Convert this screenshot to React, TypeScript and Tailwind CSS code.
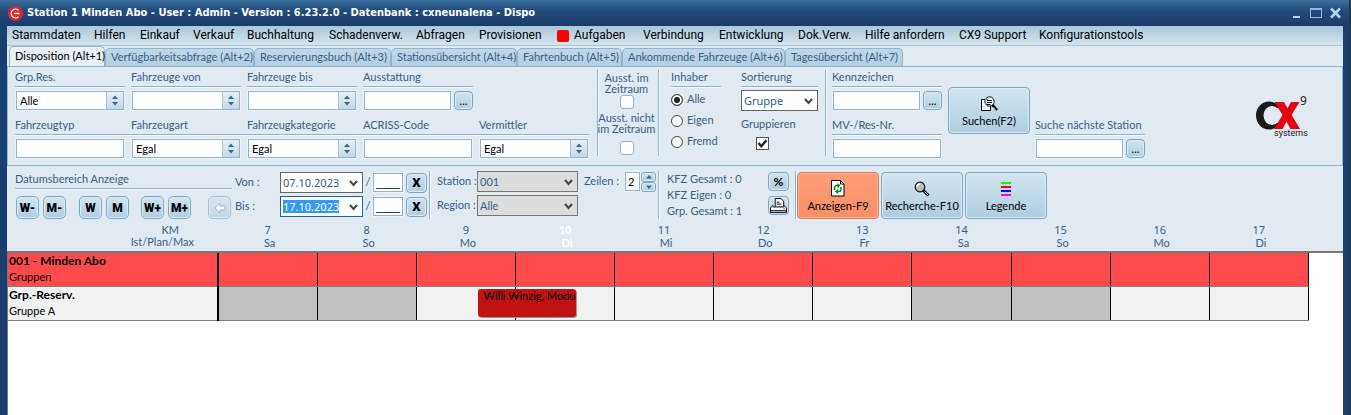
import type { ReactNode } from "react";
import clsx from "clsx";

const menu = [
  { label: "Stammdaten", width: "w-[82px]" },
  { label: "Hilfen", width: "w-[46px]" },
  { label: "Einkauf", width: "w-[53px]" },
  { label: "Verkauf", width: "w-[54px]" },
  { label: "Buchhaltung", width: "w-[82px]" },
  { label: "Schadenverw.", width: "w-[87px]" },
  { label: "Abfragen", width: "w-[63px]" },
  { label: "Provisionen", width: "w-[78px]" },
  { label: "Aufgaben", width: "w-[86px]", marker: true },
  { label: "Verbindung", width: "w-[76px]" },
  { label: "Entwicklung", width: "w-[79px]" },
  { label: "Dok.Verw.", width: "w-[67px]" },
  { label: "Hilfe anfordern", width: "w-[94px]" },
  { label: "CX9 Support", width: "w-[80px]" },
  { label: "Konfigurationstools", width: "w-[110px]" },
];

const tabs = [
  { label: "Disposition (Alt+1)", width: "w-[96px]" },
  { label: "Verfügbarkeitsabfrage (Alt+2)", width: "w-[149px]" },
  { label: "Reservierungsbuch (Alt+3)", width: "w-[137px]" },
  { label: "Stationsübersicht (Alt+4)", width: "w-[126px]" },
  { label: "Fahrtenbuch (Alt+5)", width: "w-[105px]" },
  { label: "Ankommende Fahrzeuge (Alt+6)", width: "w-[163px]" },
  { label: "Tagesübersicht (Alt+7)", width: "w-[118px]" },
];

const days = [
  { num: 7, name: "Sa" },
  { num: 8, name: "So" },
  { num: 9, name: "Mo" },
  { num: 10, name: "Di", today: true },
  { num: 11, name: "Mi" },
  { num: 12, name: "Do" },
  { num: 13, name: "Fr" },
  { num: 14, name: "Sa" },
  { num: 15, name: "So" },
  { num: 16, name: "Mo" },
  { num: 17, name: "Di" },
];

const blueButton =
  "border border-[#79a8c8] bg-linear-to-b from-[#d3e5ef] to-[#aecde0] text-black shadow-[inset_0_0_0_1px_#dcebf4]";
const underline = "border-b border-[#8fb3d3] shadow-[0_1px_0_#f8fbfd]";
const box = "border border-[#8fb5d1] bg-white text-black outline outline-[#edf3f8]";

function Caption({ id, text, joined }: { id?: string; text: string; joined?: boolean }) {
  return (
    <label
      htmlFor={id}
      className={clsx("block h-[17px] leading-[14px] whitespace-nowrap", underline, joined && "-mr-1.5")}
    >
      {text}
    </label>
  );
}

function TextField({ id, label, joined, more }: { id: string; label: string; joined?: boolean; more?: boolean }) {
  return (
    <div className="w-[110px]">
      <Caption id={id} text={label} joined={joined} />
      <div className="mt-1 flex gap-[3px] pl-px">
        <input id={id} className={clsx("h-[19px] min-w-0 px-1", box, more ? "w-[88px]" : "w-[108px]")} />
        {more && (
          <button
            aria-label={`${label} auswählen`}
            className={clsx("h-[19px] w-[19px] shrink-0 rounded-[4px] leading-[17px]", blueButton)}
          >
            ...
          </button>
        )}
      </div>
    </div>
  );
}

function SpinArrows() {
  return (
    <svg width="8" height="11" viewBox="0 0 8 11" fill="#2f6ea3">
      <path d="M4 0.5 7 4H1zM4 10.5 1 7h6z" />
    </svg>
  );
}

function SpinSelect({ id, label, value, joined }: { id: string; label: string; value: string; joined?: boolean }) {
  return (
    <div className="w-[110px]">
      <Caption id={id} text={label} joined={joined} />
      <div className="relative mt-1 ml-px w-[108px]">
        <select id={id} className={clsx("block h-[19px] w-full appearance-none pl-[3px] leading-[17px]", box)}>
          <option>{value}</option>
        </select>
        <span className="pointer-events-none absolute inset-y-px right-px flex w-[17px] items-center justify-center border-l border-[#a9c5da] bg-linear-to-b from-[#e6eff5] to-[#c6d9e6]">
          <SpinArrows />
        </span>
      </div>
    </div>
  );
}

function DropSelect({
  label,
  value,
  className,
  selected,
}: {
  label: string;
  value: string;
  className: string;
  selected?: boolean;
}) {
  return (
    <div className={clsx("relative h-[21px] border", className)}>
      {selected && <span className="absolute top-[3px] left-[2px] h-[13px] w-[56px] bg-[#3399ff]" />}
      <select
        aria-label={label}
        className={clsx(
          "relative block h-full w-full appearance-none bg-transparent pl-[2px] leading-[19px]",
          selected && "text-white",
        )}
      >
        <option>{value}</option>
      </select>
      <svg
        className="pointer-events-none absolute top-[7px] right-1"
        width="9"
        height="7"
        viewBox="0 0 9 7"
        fill="none"
        stroke="#444"
        strokeWidth="2"
      >
        <path d="M1 1 4.500 5 8 1" />
      </svg>
    </div>
  );
}

function Divider({ className = "h-[86px]" }: { className?: string }) {
  return <div className={clsx("w-0.5 shrink-0 border-l border-[#8fb3d3] bg-[#f8fbfd]", className)} />;
}

function CheckBox({ id, dark, checked }: { id: string; dark?: boolean; checked?: boolean }) {
  return (
    <span className={clsx("relative block", dark ? "size-[13px]" : "size-[14px]")}>
      <input
        id={id}
        type="checkbox"
        defaultChecked={checked}
        className={clsx(
          "peer block size-full appearance-none border bg-white",
          dark ? "border-[#555]" : "rounded-[3px] border-[#8fb5d1]",
        )}
      />
      <svg
        className="pointer-events-none absolute inset-0 hidden peer-checked:block"
        viewBox="0 0 13 13"
        fill="none"
        stroke="#222"
        strokeWidth="2.4"
      >
        <path d="M2.500 6 5.300 9.200 10.500 3.200" />
      </svg>
    </span>
  );
}

function Radio({ label, checked }: { label: string; checked?: boolean }) {
  return (
    <label className="flex h-[21px] items-center gap-1">
      <input
        type="radio"
        name="inhaber"
        defaultChecked={checked}
        className="size-3 appearance-none rounded-full border border-[#444] bg-white checked:bg-[#222] checked:shadow-[inset_0_0_0_2px_#fff]"
      />
      {label}
    </label>
  );
}

function BigButton({ label, hot, children }: { label: string; hot?: boolean; children: ReactNode }) {
  return (
    <button
      className={clsx(
        "flex h-[47px] w-[82px] shrink-0 flex-col items-center rounded-[4px] pt-1.5 whitespace-nowrap",
        hot
          ? "border border-[#cf7f62] bg-linear-to-b from-[#ff9d78] to-[#f98f66] text-black shadow-[inset_0_0_0_1px_#ffb497]"
          : blueButton,
      )}
    >
      <span className="flex h-[19px] items-center">{children}</span>
      <span className="leading-4">{label}</span>
    </button>
  );
}

function StepButton({ label, name, className }: { label: ReactNode; name?: string; className?: string }) {
  return (
    <button
      aria-label={name}
      className={clsx(
        "flex size-[23px] shrink-0 items-center justify-center rounded-[5px] font-[Roboto,sans-serif] text-[12px] font-black",
        blueButton,
        className,
      )}
    >
      {label}
    </button>
  );
}

function SearchPageIcon() {
  return (
    <svg width="17" height="16" viewBox="0 0 17 16">
      <path d="M.5 3.500h9v11h-9z" fill="#fff" stroke="#000" />
      <circle cx="8.500" cy="5.500" r="4.700" fill="#fff" stroke="#000" />
      <path d="m11.500 9 4.500 5" stroke="#000" strokeWidth="2.600" />
      <path d="m12.500 11 2 2.500" stroke="#fff" strokeWidth=".7" />
      <path d="M6 4.500h5M6 6.500h5M6 8.500h3.500" stroke="#000" />
      <path d="M4 3.500h3M3.500 5.500h2M4 7.500h2" stroke="#2cc" />
    </svg>
  );
}

function RefreshPageIcon() {
  return (
    <svg width="14" height="17" viewBox="0 0 14 17">
      <path d="M.5.500h9l3.500 3.500v12H.5z" fill="#fff" stroke="#000" />
      <path d="M9.500.500V4H13" fill="none" stroke="#000" />
      <path d="M3.500 10V7.500a2 2 0 0 1 2-2H7M10 7v2.500a2 2 0 0 1-2 2H6.500" fill="none" stroke="#008a1c" strokeWidth="1.500" />
      <path d="M6.500 3 9.500 5.500l-3 2.500zM7 9l-3 2.500 3 2.500z" fill="#008a1c" />
    </svg>
  );
}

function MagnifierIcon() {
  return (
    <svg width="16" height="16" viewBox="0 0 16 16">
      <path d="m9.500 9.500 5 5" stroke="#000" strokeWidth="3" />
      <path d="m10.500 10.500 3.500 3.500" stroke="#aaa" />
      <circle cx="6" cy="6" r="4.800" fill="#bdbdbd" stroke="#111" strokeWidth="1.200" />
      <path d="M3 6a3 3 0 0 1 3-3" fill="none" stroke="#fff" strokeWidth="1.500" />
    </svg>
  );
}

function LegendIcon() {
  return (
    <svg width="10" height="14" viewBox="0 0 10 14" shapeRendering="crispEdges">
      <path d="M0 0h10v2H0z" fill="#0f0" />
      <path d="M0 4h10v2H0z" fill="#f00" />
      <path d="M0 8h10v2H0z" fill="#00f" />
      <path d="M0 12h10v2H0z" fill="#f0f" />
    </svg>
  );
}

function PrinterIcon() {
  return (
    <svg className="shrink-0" width="17" height="16" viewBox="0 0 18 17">
      <path d="m3.500 7.500-3 3v5h17v-5l-3-3" fill="#ddd" stroke="#000" />
      <path d="M5.500 8V1h6l3 3v4z" fill="#fff" />
      <path d="M5.500 9V.500h6l3 3V9M7 4.500h3M7 6.500h5" fill="none" stroke="#000" />
      <path d="M3 9.500h12M.5 13.500h17" stroke="#000" />
      <path d="M1 10.500h16v2H1z" fill="#fff" />
      <path d="M14 11h2v1h-2z" fill="#f33" />
    </svg>
  );
}

function Logo() {
  return (
    <svg width="54" height="48" viewBox="0 0 54 48" role="img" aria-label="CX9 systems">
      <ellipse cx="13" cy="23.500" rx="13" ry="14" fill="#1a1a1a" />
      <ellipse cx="16" cy="23.500" rx="8.500" ry="9.500" fill="#e1e9f1" />
      <path d="M20 16h7v15h-7z" fill="#e1e9f1" />
      <path d="M18.500 10H28l3.500 6.500L35 10h8.500L35.500 23 44 37h-9.500L30.500 29.500 26.500 37H18l8.500-14z" fill="#e60012" />
      <text x="44" y="13" fontSize="12" fontFamily="Noto Sans, sans-serif" fill="#222">
        9
      </text>
      <text x="18" y="44" fontSize="9" fontFamily="Roboto, sans-serif" fill="#222">
        systems
      </text>
    </svg>
  );
}

function TitleBar() {
  return (
    <header className="flex h-[26px] items-center bg-linear-to-b from-[#3b709d] via-[#214c7d] via-40% to-[#1a3c6a] pr-2 pl-2">
      <svg width="15" height="15" viewBox="0 0 15 15" fill="none">
        <circle cx="7.500" cy="7.500" r="7.500" fill="#e8222a" />
        <path d="M10.500 4.200a4.400 4.400 0 1 0 0 6.600M6 7.500h5.500" stroke="#fff" strokeWidth="1.300" />
      </svg>
      <h1 className="ml-1 flex-1 font-['DejaVu_Sans_Condensed',sans-serif] text-[11px] font-bold whitespace-nowrap text-white">
        Station 1 Minden Abo - User : Admin - Version : 6.23.2.0 - Datenbank : cxneunalena - Dispo
      </h1>
      <div className="flex gap-2">
        <button aria-label="Minimieren">
          <svg width="11" height="12" viewBox="0 0 11 12">
            <path d="M2 9h7v2H2z" fill="#b5d6ea" />
          </svg>
        </button>
        <button aria-label="Maximieren">
          <svg width="12" height="12" viewBox="0 0 12 12" fill="none" stroke="#8fb9d5" shapeRendering="crispEdges">
            <path d="M.5 1.500h11v9H.5zM1 2.500h10" />
          </svg>
        </button>
        <button aria-label="Schließen">
          <svg width="11" height="12" viewBox="0 0 11 12" stroke="#b5d6ea" strokeWidth="2.600">
            <path d="m1 1.500 9 9m0-9-9 9" />
          </svg>
        </button>
      </div>
    </header>
  );
}

function FilterPanel() {
  return (
    <section className="flex h-[100px] items-start border border-[#8fb5d1] pt-[3px] pl-[7px]">
      <div className="grid grid-cols-[repeat(5,110px)] gap-x-1.5 gap-y-2">
        <SpinSelect id="grpres" label="Grp.Res." value="Alle" />
        <SpinSelect id="von" label="Fahrzeuge von" value="" />
        <SpinSelect id="bis" label="Fahrzeuge bis" value="" />
        <TextField id="ausstattung" label="Ausstattung" more />
        <span />
        <TextField id="typ" label="Fahrzeugtyp" joined />
        <SpinSelect id="art" label="Fahrzeugart" value="Egal" joined />
        <SpinSelect id="kategorie" label="Fahrzeugkategorie" value="Egal" joined />
        <TextField id="acriss" label="ACRISS-Code" joined />
        <SpinSelect id="vermittler" label="Vermittler" value="Egal" />
      </div>

      <div className="ml-2">
        <Divider />
      </div>
      <div className="mr-1 flex w-[55px] flex-col items-center text-center leading-[11px] whitespace-nowrap">
        <label htmlFor="ausst-im" className="pt-0.5">
          Ausst. im
          <br />
          Zeitraum
        </label>
        <div className="mt-px">
          <CheckBox id="ausst-im" />
        </div>
        <label htmlFor="ausst-nicht" className="pt-[3px]">
          Ausst. nicht
          <br />
          im Zeitraum
        </label>
        <div className="mt-[7px]">
          <CheckBox id="ausst-nicht" />
        </div>
      </div>
      <Divider />

      <fieldset className="ml-[11px] w-[50px]">
        <legend className={clsx("h-[17px] w-full leading-[14px]", underline)}>Inhaber</legend>
        <div className="mt-0.5">
          <Radio label="Alle" checked />
          <Radio label="Eigen" />
          <Radio label="Fremd" />
        </div>
      </fieldset>

      <div className="mr-[7px] ml-5 w-[77px]">
        <Caption text="Sortierung" />
        <div className="mt-[3px] font-['Noto_Sans',sans-serif]">
          <DropSelect label="Sortierung" value="Gruppe" className="border-[#666] bg-white" />
        </div>
        <label htmlFor="gruppieren" className="block pt-1.5 leading-[14px]">
          Gruppieren
        </label>
        <div className="mt-1.5 ml-[15px]">
          <CheckBox id="gruppieren" dark checked />
        </div>
      </div>
      <Divider />

      <div className="ml-[5px] grid gap-2">
        <TextField id="kennzeichen" label="Kennzeichen" more />
        <TextField id="mvres" label="MV-/Res-Nr." />
      </div>
      <div className="mt-[17px] ml-1.5">
        <BigButton label="Suchen(F2)">
          <SearchPageIcon />
        </BigButton>
      </div>
      <div className="mt-12 ml-[5px]">
        <TextField id="station-next" label="Suche nächste Station" more />
      </div>
      <div className="mt-[22px] mr-8 ml-auto">
        <Logo />
      </div>
    </section>
  );
}

function DateRow({ label, value, selected }: { label: string; value: string; selected?: boolean }) {
  return (
    <div className="flex h-[21px] items-center">
      <span className="w-[45px]">{label} :</span>
      <div className="w-[83px] font-['Noto_Sans',sans-serif]">
        <DropSelect
          label={label}
          value={value}
          selected={selected}
          className={selected ? "border-[#1f66a8] bg-white" : "border-[#666] bg-white"}
        />
      </div>
      <span className="w-[10px] text-center">/</span>
      <input
        aria-label={`${label} Zeit`}
        defaultValue="____"
        className={clsx("h-[19px] w-[30px] px-[2px] font-['Liberation_Sans',sans-serif]", box)}
      />
      <button
        aria-label={`${label} löschen`}
        className={clsx(
          "ml-[3px] h-5 w-[21px] rounded-[4px] font-[Roboto,sans-serif] text-[13px] leading-none font-black",
          blueButton,
        )}
      >
        X
      </button>
    </div>
  );
}

function Toolbar() {
  return (
    <section className="flex h-[57px] items-start pt-[5px] pl-2">
      <div className="w-[220px]">
        <h2 className={clsx("h-[18px] w-[217px] leading-[15px]", underline)}>Datumsbereich Anzeige</h2>
        <div className="mt-[7px] flex gap-1 pl-px">
          <StepButton label="W-" />
          <StepButton label="M-" />
          <StepButton label="W" className="ml-[9px]" />
          <StepButton label="M" />
          <StepButton label="W+" className="ml-2" />
          <StepButton label="M+" />
          <StepButton
            name="Zurück"
            className="ml-[13px] opacity-60"
            label={
              <svg width="12" height="12" viewBox="0 0 12 12" fill="#fff" stroke="#8c9aa5">
                <path d="M6 1 1 6l5 5V8h5V4H6z" />
              </svg>
            }
          />
        </div>
      </div>

      <div className="grid gap-[3px] pt-px">
        <DateRow label="Von" value="07.10.2023" />
        <DateRow label="Bis" value="17.10.2023" selected />
      </div>
      <div className="ml-0.5">
        <Divider className="h-12" />
      </div>

      <div className="ml-1.5 grid w-[141px] grid-cols-[40px_1fr] items-center gap-y-[3px] whitespace-nowrap">
        <span>Station :</span>
        <DropSelect label="Station" value="001" className="border-[#777] bg-[#dcdcdc]" />
        <span>Region :</span>
        <DropSelect label="Region" value="Alle" className="border-[#777] bg-[#dcdcdc]" />
      </div>

      <div className="mr-0.5 ml-1.5 flex h-[21px] items-center">
        <label htmlFor="zeilen" className="w-[41px] whitespace-nowrap">
          Zeilen :
        </label>
        <input id="zeilen" defaultValue="2" className={clsx("h-[19px] w-[15px] px-[2px]", box)} />
        <div className="ml-px flex flex-col">
          <button aria-label="Mehr Zeilen" className={clsx("flex h-2.5 w-[15px] items-center justify-center rounded-[3px]", blueButton)}>
            <svg width="6" height="4" viewBox="0 0 6 4" fill="#2f6ea3">
              <path d="M3 0 6 3.500H0z" />
            </svg>
          </button>
          <button aria-label="Weniger Zeilen" className={clsx("flex h-2.5 w-[15px] items-center justify-center rounded-[3px]", blueButton)}>
            <svg width="6" height="4" viewBox="0 0 6 4" fill="#2f6ea3">
              <path d="M3 4 0 .500h6z" />
            </svg>
          </button>
        </div>
      </div>
      <Divider className="h-12" />

      <ul className="ml-[7px] w-[101px] leading-4">
        <li>KFZ Gesamt : 0</li>
        <li>KFZ Eigen : 0</li>
        <li>Grp. Gesamt : 1</li>
      </ul>
      <div className="mt-px grid gap-[5px]">
        <button className={clsx("h-[19px] w-[21px] rounded-[4px] text-[12px] leading-none font-bold", blueButton)}>%</button>
        <button aria-label="Drucken" className={clsx("flex h-[19px] w-[21px] items-center justify-center rounded-[4px]", blueButton)}>
          <PrinterIcon />
        </button>
      </div>
      <div className="ml-1.5">
        <Divider className="h-12" />
      </div>
      <div className="mt-px flex gap-0.5">
        <BigButton label="Anzeigen-F9" hot>
          <RefreshPageIcon />
        </BigButton>
        <BigButton label="Recherche-F10">
          <MagnifierIcon />
        </BigButton>
        <BigButton label="Legende">
          <LegendIcon />
        </BigButton>
      </div>
    </section>
  );
}

function Planner() {
  return (
    <div className="flex flex-1 flex-col">
      <div className="relative flex-1 border-l border-[#777] bg-white">
        {/* header band runs past the last day column */}
        <div className="absolute inset-x-0 top-0 -ml-px h-[30px] border-b-2 border-[#777] bg-[#e1e9f1]" />
        <div className="relative pr-[34px]">
          <table className="w-full table-fixed border-collapse">
            <colgroup>
              <col className="w-[210px]" />
              {days.map((d) => (
                <col key={d.num} />
              ))}
            </colgroup>
            <thead>
              <tr className="h-[30px] align-top">
                <th className="pr-[24px] text-right leading-[12px] font-normal">
                  <span className="inline-block pt-px text-center">
                    <span className="block pl-4">KM</span>
                    Ist/Plan/Max
                  </span>
                </th>
                {days.map((d) => (
                  <th
                    key={d.num}
                    className={clsx("leading-[13px]", d.today ? "font-bold text-white" : "font-normal")}
                  >
                    <span className="block font-['Noto_Sans',sans-serif]">{d.num}</span>
                    <span className="block pl-1">{d.name}</span>
                  </th>
                ))}
              </tr>
            </thead>
            <tbody className="text-black">
              <tr className="h-[33px] bg-[#ff4b4b]">
                <td className="border-r-2 border-b border-r-black border-b-[#808080] p-0 pl-px align-top">
                  <div className="text-[12px] leading-4 font-bold">001 - Minden Abo</div>
                  <div className="leading-4">Gruppen</div>
                </td>
                {days.map((d) => (
                  <td key={d.num} className="border-r border-b border-r-black border-b-[#808080] p-0" />
                ))}
              </tr>
              <tr className="h-[34px] bg-[#f1f1f1]">
                <td className="border-r-2 border-b border-r-black border-b-[#808080] p-0 pl-px align-top">
                  <div className="text-[12px] leading-4 font-bold">Grp.-Reserv.</div>
                  <div className="leading-4">Gruppe A</div>
                </td>
                {days.map((d) => (
                  <td
                    key={d.num}
                    className={clsx(
                      "relative border-r border-b border-r-black border-b-[#808080] p-0",
                      (d.name === "Sa" || d.name === "So") && "bg-[#c0c0c0]",
                    )}
                  >
                    {d.num === 9 && (
                      <div className="absolute top-0.5 left-[62%] z-10 h-7 w-full rounded-[3px] bg-[#c11212] pl-1.5 leading-[14px] whitespace-nowrap shadow-[1px_1px_0_#999]">
                        Willi Winzig, Modu
                      </div>
                    )}
                  </td>
                ))}
              </tr>
            </tbody>
          </table>
        </div>
      </div>
    </div>
  );
}

export default function App() {
  return (
    <div className="flex min-h-screen flex-col border-r-2 border-[#24364a] bg-[#1a3e6e] font-[Lato,Arial,sans-serif] text-[11px] text-[#33618c]">
      <TitleBar />
      <main className="mr-1.5 flex flex-1 flex-col border-l-[7px] border-[#1a3e6e] bg-[#e1e9f1]">
        <nav className="flex h-5 items-center border-b border-[#a9c8dc] bg-linear-to-b from-[#a9c8da] to-[#d6e3ec] pl-[5px] font-[Roboto,sans-serif] text-[12px] text-black">
          {menu.map((m) => (
            <button
              key={m.label}
              className={clsx("flex shrink-0 items-center text-left leading-[19px] whitespace-nowrap", m.width)}
            >
              {m.marker && <span className="mr-[5px] size-3 rounded-[2px] bg-[#ff0000]" />}
              {m.label}
            </button>
          ))}
        </nav>

        <div role="tablist" className="flex h-5 items-end pl-0.5">
          {tabs.map((t, i) => (
            <button
              key={t.label}
              role="tab"
              aria-selected={i === 0}
              className={clsx(
                "shrink-0 rounded-t-[5px] border border-b-0 border-[#8fb5d1] pl-[5px] text-left whitespace-nowrap",
                t.width,
                i === 0
                  ? "-mb-px h-[21px] bg-[#e9f0f6] pb-0.5 text-black"
                  : "h-[18px] bg-linear-to-b from-[#c3d7e5] to-[#b4cfe0]",
              )}
            >
              {t.label}
            </button>
          ))}
        </div>

        <FilterPanel />
        <Toolbar />
        <Planner />
      </main>
    </div>
  );
}
